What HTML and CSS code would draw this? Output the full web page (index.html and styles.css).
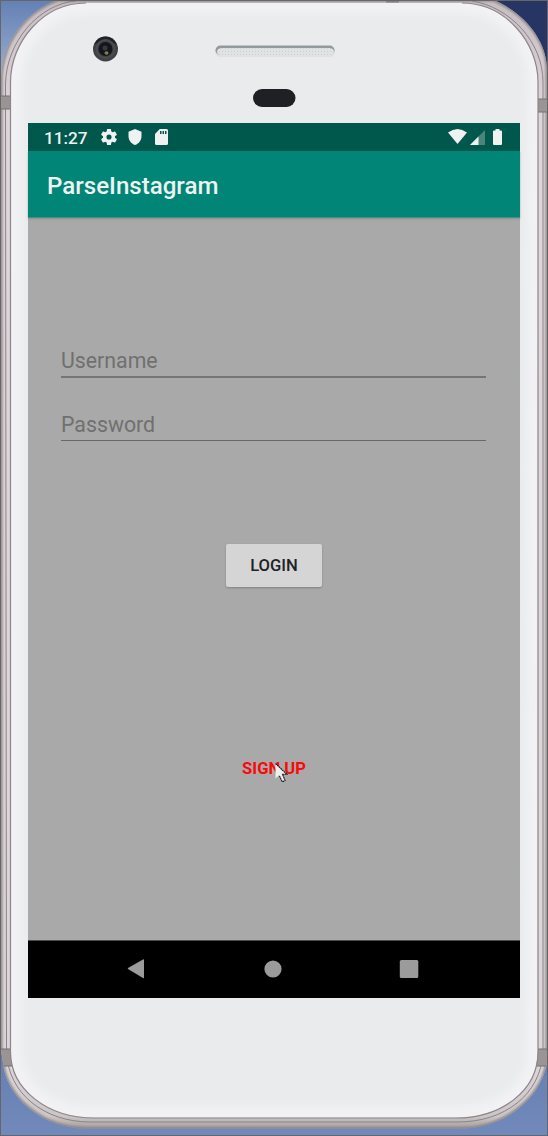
FILE: index.html
```html
<!DOCTYPE html>
<html lang="en">
<head>
<meta charset="utf-8">
<title>ParseInstagram</title>
<link rel="stylesheet" href="styles.css">
</head>
<body>
<main class="device">
  <svg class="shell" viewBox="0 0 548 1136" aria-hidden="true">
    <defs>
      <linearGradient id="sky" x1="0" y1="0" x2="0" y2="1">
        <stop offset="0" stop-color="#6480b4"/><stop offset=".07" stop-color="#9db0d2"/><stop offset=".9" stop-color="#6279ae"/><stop offset="1" stop-color="#718abb"/>
      </linearGradient>
      <linearGradient id="rim" x1="0" y1="0" x2="0" y2="1">
        <stop offset="0" stop-color="#c6bec2"/><stop offset=".1" stop-color="#ddd5d9"/><stop offset=".94" stop-color="#dcd5d8"/><stop offset=".983" stop-color="#cbc5c6"/><stop offset="1" stop-color="#8b8585"/>
      </linearGradient>
      <clipPath id="faceClip"><path d="M11 82C11 42 43 3 86 3H462C505 3 538 42 538 82L537.500 1052C537 1091 501 1117.500 456 1117.500H94C47 1117.500 11 1089 11 1052Z"/></clipPath>
      <filter id="soft" x="-10%" y="-10%" width="120%" height="120%"><feGaussianBlur stdDeviation="4"/></filter>
      <filter id="edge" x="-10%" y="-10%" width="120%" height="120%"><feGaussianBlur stdDeviation="1.200"/></filter>
      <clipPath id="bodyClip"><path d="M1 78C2 43 25 11 58 0H494C524 13 547 40 547 70V1062C541 1100 502 1128.500 462 1128.500H86C42 1128.500 5 1096 3 1062L1 1050Z"/></clipPath>
      <pattern id="mesh" width="3" height="3" patternUnits="userSpaceOnUse"><rect width="3" height="3" fill="#e0e3e4"/><path d="M0 0H1V1H0Z" fill="#ccd2d4"/></pattern>
    </defs>
    <rect width="548" height="1136" fill="url(#sky)"/>
    <rect x="440" width="108" height="100" fill="#273565"/>
    <g clip-path="url(#bodyClip)">
      <rect width="548" height="1136" fill="url(#rim)"/>
      <path d="M1 78C2 43 25 11 58 0H494C524 13 547 40 547 70V1062C541 1100 502 1128.500 462 1128.500H86C42 1128.500 5 1096 3 1062L1 1050Z" fill="none" stroke="#8d8586" stroke-width="3" filter="url(#edge)"/>
      <path d="M5.500 84C6 43 38 4 76 1M472 1C510 7 543 42 543 82V1052C541 1095 504 1122 458 1122H90C45 1122 8 1094 6.500 1052L5.500 84" fill="none" stroke="#8b8387" stroke-width="1"/>
      <path d="M1 96H11V109H1ZM538 99H547V112H538ZM1 1049H12L14 1066H2ZM538 1049H547V1066H535Z" fill="#9b9495"/>
      <path d="M1 96H11M1 109H11M538 99H547M538 112H547M1 1049H12M2 1066H14M538 1049H547M535 1066H547" stroke="#777172"/>
    </g>
    <g clip-path="url(#faceClip)">
      <rect width="548" height="1136" fill="#e9ebec"/>
      <path d="M11 82C11 42 43 3 86 3H462C505 3 538 42 538 82L537.500 1052C537 1091 501 1117.500 456 1117.500H94C47 1117.500 11 1089 11 1052Z" fill="none" stroke="#f2f2f5" stroke-width="22" filter="url(#soft)"/>
    </g>
    <path d="M86 3C43 3 10.500 42 10.500 82V1052C10.500 1089 47 1118 94 1118H456C501 1118 538 1091 538 1052V82C538 42 505 3 462 3" fill="none" stroke="#8d8589" stroke-width="1.200"/>
    <path d="M386 1.500H399" stroke="#858083" stroke-width="2"/>
    <circle cx="105.500" cy="49" r="12.500" fill="#3f4245"/>
    <path d="M94 45A12 12 0 0 1 117 45Q105 37 94 45Z" fill="#202125"/>
    <circle cx="105.500" cy="49" r="9" fill="none" stroke="#494c50" stroke-width="2"/>
    <circle cx="105.500" cy="49" r="7" fill="#15161b"/>
    <circle cx="105" cy="48" r="2.500" fill="#333746"/>
    <ellipse cx="106.500" cy="53" rx="2" ry="1.800" fill="#81804a"/>
    <rect x="215" y="46" width="120" height="11" rx="5.500" fill="#e0e2e2"/>
    <rect x="215.500" y="45.500" width="119" height="9.500" rx="4.700" fill="#929a9e"/>
    <path d="M217 51Q218 48 222 48H329Q333 48 334 51V52Q333 55.500 329 55.500H221Q217 55 217 51Z" fill="url(#mesh)"/>
    <rect x="253" y="89" width="42.500" height="18" rx="9" fill="#1e2024"/>
    <rect x=".5" y=".5" width="547" height="1135" fill="none" stroke="#666"/>
  </svg>

  <section class="screen">
    <header class="status">
      <span class="time">11:27</span>
      <svg class="gear" viewBox="2 2 20 20"><path fill-rule="evenodd" d="M19.430 13c.04-.320.070-.650.070-1s-.03-.680-.070-1l2.110-1.650a.5.500 0 0 0 .12-.640l-2-3.460a.5.500 0 0 0-.610-.220l-2.490 1a7 7 0 0 0-1.690-.980L14.500 2.400A.5.500 0 0 0 14 2h-4a.5.500 0 0 0-.5.400l-.370 2.650a7 7 0 0 0-1.690.980l-2.490-1a.5.500 0 0 0-.610.220l-2 3.460a.5.500 0 0 0 .120.640L4.570 11a8 8 0 0 0 0 2l-2.110 1.650a.5.500 0 0 0-.120.640l2 3.460a.5.500 0 0 0 .610.220l2.490-1a7 7 0 0 0 1.690.980L9.500 21.600a.5.500 0 0 0 .5.400h4a.5.500 0 0 0 .5-.400l.370-2.650a7 7 0 0 0 1.690-.980l2.490 1a.5.500 0 0 0 .610-.220l2-3.460a.5.500 0 0 0-.120-.640ZM12 15.200A3.200 3.200 0 1 1 12 8.800A3.200 3.200 0 0 1 12 15.200Z"/></svg>
      <svg class="shield" viewBox="0 0 13 16"><path d="M6.500 0L13 2.800V7C13 11 10.500 14.700 6.500 16C2.500 14.700 0 11 0 7V2.800Z"/></svg>
      <svg class="card" viewBox="0 0 13 16"><path fill-rule="evenodd" d="M4.800 0H11.500Q13 0 13 1.500V14.500Q13 16 11.500 16H1.500Q0 16 0 14.500V5ZM5 2V5H6.500V2ZM7.500 2V5H9V2ZM10 2V5H11.500V2Z"/></svg>
      <svg class="wifi" viewBox="0 0 19 15"><path d="M0 3.500Q9.500-3.500 19 3.500L9.500 15Z"/></svg>
      <svg class="signal" viewBox="0 0 15 15"><path d="M15 0V15H0Z" opacity=".3"/><path d="M8.500 6.500V15H0Z"/></svg>
      <svg class="battery" viewBox="0 0 9 16"><path d="M2.500 0H6.500V1.600H8Q9 1.600 9 2.600V15Q9 16 8 16H1Q0 16 0 15V2.600Q0 1.600 1 1.600H2.500Z"/></svg>
    </header>
    <h1 class="appbar"><span class="title">ParseInstagram</span></h1>
    <form class="content">
      <div class="field username"><span>Username</span></div>
      <div class="field password"><span>Password</span></div>
      <button class="login" type="button">LOGIN</button>
      <div class="signup">SIGN UP
        <svg class="cursor" viewBox="0 0 13 20"><path d="M.5.500V15.500L4.200 12L7.300 18.800L10 17.500L7 11.200H12Z" fill="#efefef"/><path d="M.5.500L11.800 11.200H7.500L10 17.500L7.300 18.800L4.500 13" fill="none" stroke="#111" stroke-width="1.100" stroke-dasharray="1.800 .5"/></svg>
      </div>
    </form>
    <nav class="navbar">
      <svg viewBox="0 0 20 20"><path d="M2 10Q1.500 9.500 2 9L17 .5Q18 0 18 1V18.500Q18 19.500 17 19Z"/></svg>
      <svg viewBox="0 0 20 20"><circle cx="10" cy="10" r="8.600"/></svg>
      <svg viewBox="0 0 20 20"><rect x=".8" y="1" width="18.500" height="18" rx="1.500"/></svg>
    </nav>
  </section>
</main>
</body>
</html>
```
FILE: styles.css
```css
* { box-sizing: border-box; }
body { margin: 0; font-family: Roboto, "Liberation Sans", sans-serif; }
svg { display: block; flex: none; }
.device { position: relative; width: 548px; height: 1136px; padding: 123px 28px 138px; overflow: hidden; }
.shell { position: absolute; inset: 0; width: 548px; height: 1136px; }
.screen { position: relative; width: 492px; height: 875px; display: flex; flex-direction: column; background: #a9a9a9; }
.status { height: 28px; display: flex; align-items: center; padding: 0 18px 0 16px; background: #00574b; color: #eef2f1; }
.status svg { fill: #f0f2f2; }
.time { width: 57px; padding-top: 1px; font-size: 17.2px; font-weight: 500; line-height: 20px; }
.gear { width: 16px; height: 16px; margin-right: 11px; }
.shield { width: 14px; height: 16px; margin-right: 13px; }
.card { width: 13px; height: 16px; }
.wifi { width: 19px; height: 15px; margin: -2px 3px 0 auto; }
.signal { width: 15px; height: 15px; margin-right: 8px; }
.battery { width: 9px; height: 16px; }
.appbar { height: 67px; margin: 0; padding: 0 19px; display: flex; align-items: center; background: #008577; border-bottom: 1px solid #458d85; box-shadow: 0 1px 2px #6666; color: #eef2f1; font-size: 24.1px; font-weight: 500; line-height: 28px; }
.title { padding-top: 3px; }
.content { flex: 1; display: flex; flex-direction: column; align-items: center; padding-top: 123px; }
.field { width: 425px; height: 37px; margin-right: 1px; border-bottom: 2px solid #757575; color: #707070; font-size: 21.3px; line-height: 25px; padding-top: 7px; }
.password { height: 37px; margin-top: 26px; padding-top: 8px; border-bottom: 1px solid #686868; }
.login { width: 96px; height: 43px; margin-top: 103px; padding: 1px 0 0; border: 0; border-radius: 2px; background: #d5d5d5; box-shadow: 0 1px 2px #6669; color: #202225; font-family: inherit; font-size: 16.6px; font-weight: 500; line-height: 20px; }
.signup { position: relative; margin-top: 172px; color: #f90909; font-size: 16.6px; font-weight: 700; line-height: 20px; }
.cursor { position: absolute; left: 33px; top: 4px; width: 13px; height: 20px; }
.navbar { height: 58px; display: flex; justify-content: space-between; align-items: center; padding: 0 101px 2px 98px; border-top: 1px solid #4d4d4d; background: #000; }
.navbar svg { width: 20px; height: 20px; fill: #9b9b9b; }
```
